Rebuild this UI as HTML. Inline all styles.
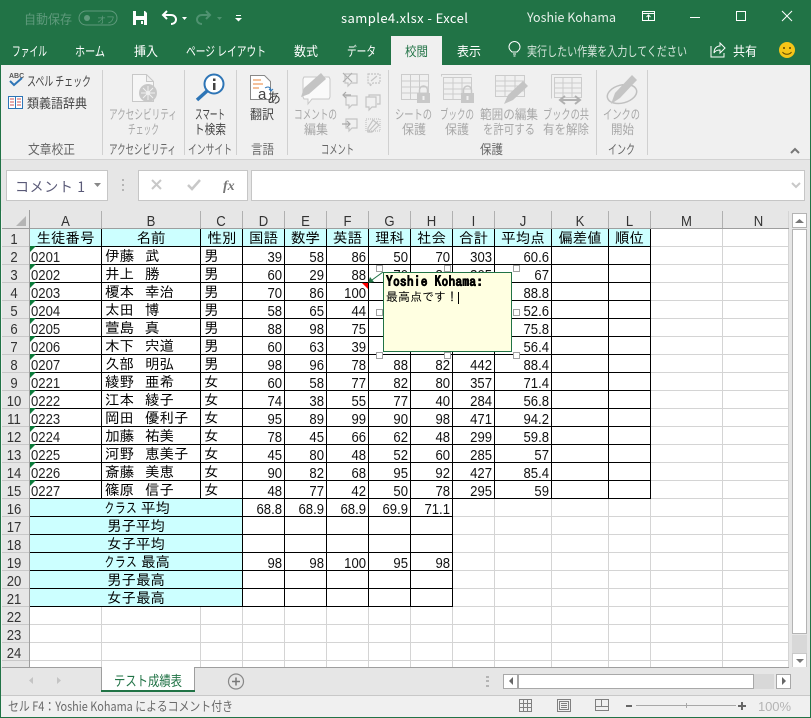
<!DOCTYPE html>
<html lang="ja"><head><meta charset="utf-8"><title>sample4.xlsx - Excel</title>
<style>
html,body{margin:0;padding:0;width:811px;height:718px;overflow:hidden;background:#f0f0f0}
svg{display:block}
rect{shape-rendering:crispEdges}
.u{font-family:"Noto Sans CJK JP","Liberation Sans",sans-serif;font-size:13px}
.w{fill:#fff}.g{fill:#a8a8a8}.d{fill:#444}.l{fill:#666}
.m{text-anchor:middle}
.c{font-family:"IPAGothic","Noto Sans CJK JP",sans-serif;font-size:14.5px;fill:#000}
.n{font-family:"Liberation Sans",sans-serif;font-size:14.5px;fill:#111;text-anchor:end}
.n text{transform-box:fill-box;transform-origin:100% 50%;transform:scaleX(.905)}
.a{font-family:"Liberation Sans",sans-serif;font-size:14.5px;fill:#222}
.a text{transform-box:fill-box;transform-origin:0 50%;transform:scaleX(.905)}
.h{font-family:"Liberation Sans",sans-serif;font-size:14.5px;fill:#333;text-anchor:middle}
.h text{transform-box:fill-box;transform-origin:50% 50%;transform:scaleX(.905)}
.t{fill:#0b7a3a}
.bk{fill:#000}
.lg{fill:#d4d4d4}
.hd{fill:#fff;stroke:#a0a0a0;stroke-width:1;shape-rendering:crispEdges}
.ic{fill:none;stroke:#c4c4c4;stroke-width:1.2}
.if{fill:#c4c4c4}
</style></head><body>
<svg width="811" height="718" viewBox="0 0 811 718" xmlns="http://www.w3.org/2000/svg">
<!-- frame -->
<rect width="811" height="718" fill="#217346"/>
<rect x="1" y="65" width="809" height="652" fill="#f0f0f0"/>
<!-- title -->
<text class="u" x="24" y="24" fill="#5f9a7c" textLength="48" lengthAdjust="spacingAndGlyphs">自動保存</text>
<rect x="79" y="11" width="38" height="14" rx="7" fill="none" stroke="#5f9a7c" style="shape-rendering:auto"/>
<circle cx="87" cy="18" r="3" fill="#5f9a7c"/>
<text class="u" x="97" y="23" style="font-size:9px" fill="#5f9a7c">オフ</text>
<path d="M133 11h12l2 2v12h-14z" fill="#fff"/><rect x="136" y="11" width="8" height="5" fill="#217346"/><rect x="136" y="20" width="8" height="5" fill="#217346"/><rect x="141" y="21" width="2" height="3" fill="#fff"/>
<path d="M167 11l-4 4 4 4M163 15h8c3 0 5 2 5 4.500s-2 4.500-5 4.500" fill="none" stroke="#fff" stroke-width="2"/>
<path d="M182 17h5l-2.500 3z" fill="#fff"/>
<path d="M206 11l4 4-4 4M210 15h-8c-3 0-5 2-5 4.500s2 4.500 5 4.500" fill="none" stroke="#4f9270" stroke-width="2"/>
<path d="M217 17h5l-2.500 3z" fill="#4f9270"/>
<rect x="236" y="15" width="5" height="1" fill="#fff"/><path d="M235 18h7l-3.500 3.500z" fill="#fff"/>
<text class="u w" x="341" y="23" style="font-size:13px" textLength="127" lengthAdjust="spacing">sample4.xlsx  -  Excel</text>
<text class="u w" x="527" y="22" style="font-size:13px;fill:#e6f0ea" textLength="89" lengthAdjust="spacingAndGlyphs">Yoshie Kohama</text>
<rect x="642.500" y="11.500" width="12" height="9" fill="none" stroke="#fff"/><rect x="642" y="13" width="13" height="1" fill="#fff"/><path d="M648.500 20v-5M646.500 17l2-2 2 2" stroke="#fff" fill="none"/>
<rect x="690" y="17" width="10" height="1" fill="#fff"/>
<rect x="736.500" y="11.500" width="9" height="9" fill="none" stroke="#fff"/>
<path d="M782 11l10 10M792 11l-10 10" stroke="#fff" fill="none"/>
<!-- tabs -->
<rect x="391" y="36" width="51" height="29" fill="#f0f0f0"/>
<g class="u">
<text class="w" x="12" y="56" textLength="35" lengthAdjust="spacingAndGlyphs">ファイル</text>
<text class="w" x="75" y="56" textLength="30" lengthAdjust="spacingAndGlyphs">ホーム</text>
<text class="w" x="134" y="56" textLength="24" lengthAdjust="spacingAndGlyphs">挿入</text>
<text class="w" x="186" y="56" textLength="80" lengthAdjust="spacingAndGlyphs">ページ レイアウト</text>
<text class="w" x="294" y="56" textLength="24" lengthAdjust="spacingAndGlyphs">数式</text>
<text class="w" x="347" y="56" textLength="29" lengthAdjust="spacingAndGlyphs">データ</text>
<text x="405" y="56" fill="#217346" textLength="23" lengthAdjust="spacingAndGlyphs">校閲</text>
<text class="w" x="457" y="56" textLength="24" lengthAdjust="spacingAndGlyphs">表示</text>
<text x="527" y="56" fill="#d5e5dc" textLength="160" lengthAdjust="spacingAndGlyphs">実行したい作業を入力してください</text>
<text class="w" x="733" y="56" textLength="24" lengthAdjust="spacingAndGlyphs">共有</text>
</g>
<path d="M512 52c-2-2-3-3-3-5a5.500 5.500 0 0 1 11 0c0 2-1 3-3 5zM513 54h3M513.500 56h2" fill="none" stroke="#fff"/>
<path d="M711 46v11h13v-4M714 53c0-5 3-7 6-7v-3l5 5-5 5v-3c-3 0-5 1-6 3z" fill="none" stroke="#fff"/>
<circle cx="787" cy="50" r="8" fill="#f5c518"/><circle cx="784" cy="48" r="1" fill="#5a4500"/><circle cx="790" cy="48" r="1" fill="#5a4500"/><path d="M782.500 52c2 3 7 3 9 0" fill="none" stroke="#5a4500"/>
<!-- ribbon -->
<rect x="1" y="159" width="809" height="1" fill="#d2d2d2"/>
<rect x="1" y="160" width="809" height="51" fill="#e6e6e6"/>
<g fill="#d0d0d0">
<rect x="102" y="70" width="1" height="85"/><rect x="184" y="70" width="1" height="85"/><rect x="236" y="70" width="1" height="85"/><rect x="287" y="70" width="1" height="85"/><rect x="388" y="70" width="1" height="85"/><rect x="596" y="70" width="1" height="85"/><rect x="647" y="70" width="1" height="85"/>
</g>
<g class="u">
<text class="d" x="27" y="86" textLength="64" lengthAdjust="spacingAndGlyphs">スペル チェック</text>
<text class="d" x="27" y="108" textLength="60" lengthAdjust="spacingAndGlyphs">類義語辞典</text>
<text class="l" x="28" y="154" textLength="47" lengthAdjust="spacingAndGlyphs">文章校正</text>
<text class="g" x="109" y="119" textLength="68" lengthAdjust="spacingAndGlyphs">アクセシビリティ</text>
<text class="g" x="128" y="134" textLength="31" lengthAdjust="spacingAndGlyphs">チェック</text>
<text class="l" x="109" y="154" textLength="67" lengthAdjust="spacingAndGlyphs">アクセシビリティ</text>
<text class="d" x="195" y="119" textLength="30" lengthAdjust="spacingAndGlyphs">スマート</text>
<text class="d" x="194" y="134" textLength="32" lengthAdjust="spacingAndGlyphs">ト検索</text>
<text class="l" x="188" y="154" textLength="44" lengthAdjust="spacingAndGlyphs">インサイト</text>
<text class="d" x="250" y="119" textLength="24" lengthAdjust="spacingAndGlyphs">翻訳</text>
<text class="l" x="251" y="154" textLength="23" lengthAdjust="spacingAndGlyphs">言語</text>
<text class="g" x="294" y="119" textLength="43" lengthAdjust="spacingAndGlyphs">コメントの</text>
<text class="g" x="304" y="134" textLength="24" lengthAdjust="spacingAndGlyphs">編集</text>
<text class="l" x="321" y="154" textLength="33" lengthAdjust="spacingAndGlyphs">コメント</text>
<text class="g" x="395" y="119" textLength="37" lengthAdjust="spacingAndGlyphs">シートの</text>
<text class="g" x="402" y="134" textLength="24" lengthAdjust="spacingAndGlyphs">保護</text>
<text class="g" x="440" y="119" textLength="34" lengthAdjust="spacingAndGlyphs">ブックの</text>
<text class="g" x="445" y="134" textLength="24" lengthAdjust="spacingAndGlyphs">保護</text>
<text class="g" x="480" y="119" textLength="58" lengthAdjust="spacingAndGlyphs">範囲の編集</text>
<text class="g" x="483" y="134" textLength="52" lengthAdjust="spacingAndGlyphs">を許可する</text>
<text class="g" x="543" y="119" textLength="46" lengthAdjust="spacingAndGlyphs">ブックの共</text>
<text class="g" x="543" y="134" textLength="46" lengthAdjust="spacingAndGlyphs">有を解除</text>
<text class="l" x="480" y="154" textLength="23" lengthAdjust="spacingAndGlyphs">保護</text>
<text class="g" x="603" y="119" textLength="37" lengthAdjust="spacingAndGlyphs">インクの</text>
<text class="g" x="611" y="134" textLength="23" lengthAdjust="spacingAndGlyphs">開始</text>
<text class="l" x="608" y="154" textLength="27" lengthAdjust="spacingAndGlyphs">インク</text>
</g>
<!-- ribbon icons -->
<text x="9" y="78" style="font:bold 7px 'Liberation Sans',sans-serif" fill="#555">ABC</text>
<path d="M10 81l4 4 8-7" fill="none" stroke="#2e75b6" stroke-width="2"/>
<rect x="8.500" y="96.500" width="14" height="12" fill="#fff" stroke="#2e75b6"/><rect x="15" y="96" width="1" height="13" fill="#2e75b6"/>
<path d="M10 99h4M10 102h4M10 105h4M17 99h4M17 102h4M17 105h4" stroke="#c55" stroke-width="1"/>
<path d="M132.500 74.500h14l7 7v20h-21zM146.500 74.500v7h7" fill="#f6f6f6" stroke="#c8c8c8"/>
<circle cx="148" cy="93" r="9" fill="#c8c8c8"/><circle cx="148" cy="93" r="2" fill="#f0f0f0"/><path d="M148 86v14M141 93h14M143 88l10 10M153 88l-10 10" stroke="#f0f0f0"/>
<circle cx="214" cy="84" r="9.500" fill="#fff" stroke="#2e75b6" stroke-width="2"/><rect x="213" y="83" width="2.500" height="7" fill="#444"/><rect x="213" y="78.500" width="2.500" height="2.500" fill="#444"/>
<path d="M207 91l-10 9" stroke="#2e75b6" stroke-width="3.500" fill="none"/>
<path d="M250.500 75.500h14l6 6v18h-20z" fill="#fff" stroke="#888"/>
<path d="M253 80h8M253 84h10M253 88h6" stroke="#e8833a" fill="none"/>
<text x="258" y="99" style="font:15px 'Liberation Sans',sans-serif" fill="#444">a</text>
<text x="267" y="103" style="font:14px 'Noto Sans CJK JP',sans-serif" fill="#444">あ</text>
<path d="M265 88c3-2 5-1 6 2M269 89l2 2 2-2" fill="none" stroke="#2e75b6"/>
<!-- comment icons -->
<path d="M304 77h25l1 2v18l-1 2h-17l-4 5v-5h-4l-1-2v-18z" fill="#fafafa" stroke="#c8c8c8"/>
<path d="M301 97l3-9 17-15 5 6-17 15z" fill="#c4c4c4"/>
<g class="ic">
<path d="M345 74h12v9h-6l-3 3v-3h-3z"/><path d="M343 73l9 9M352 73l-9 9" stroke="#b0b0b0"/>
<path d="M368 74h12v9h-7l-3 3v-3h-2z" stroke-dasharray="2 1"/><path d="M371 81l6-5"/>
<path d="M346 96h11v9h-5l-3 3v-3h-3z"/><path d="M351 95h-8M346 92l-3 3 3 3" stroke="#a8a8a8"/>
<path d="M366 97h10v10h-4l-3 3v-3h-3zM369 97v-2h11v9h-3"/>
<path d="M346 119h11v9h-5l-3 3v-3h-3z"/><path d="M342 124h8M347 121l3 3-3 3" stroke="#a8a8a8"/>
<rect x="366" y="119" width="14" height="12" stroke-dasharray="1 1" style="shape-rendering:auto"/><path d="M369 131l9-10M373 120l6 5-7 7h-4v-4z"/>
</g>
<!-- protect icons -->
<g fill="none" stroke="#cccccc">
<path d="M401.500 74.500h27v25h-27zM401.500 81h27M401.500 87h27M401.500 93h27M410.500 74.500v25M419.500 74.500v25"/>
<path d="M441.500 76.500v-2h30M443.500 77.500h28v22h-28zM443.500 83h28M443.500 89h28M443.500 94h28M453 77.500v22M462 77.500v22"/>
<path d="M495.500 75.500h29v21h-29zM495.500 81h29M495.500 86h29M495.500 91h29M505 75.500v21M515 75.500v21"/>
<path d="M551.500 74.500h30M551.500 74.500v24M554.500 77.500h27v20h-27zM554.500 83h27M554.500 88h27M554.500 93h27M563 77.500v20M572 77.500v20"/>
</g>
<rect x="417" y="93" width="13" height="10" fill="#c8c8c8"/><path d="M419.500 93v-3a4 4 0 0 1 8 0v3" fill="none" stroke="#c8c8c8" stroke-width="1.500"/><rect x="422.500" y="96" width="2" height="4" fill="#f0f0f0"/>
<rect x="461" y="93" width="13" height="10" fill="#c8c8c8"/><path d="M463.500 93v-3a4 4 0 0 1 8 0v3" fill="none" stroke="#c8c8c8" stroke-width="1.500"/><rect x="466.500" y="96" width="2" height="4" fill="#f0f0f0"/>
<path d="M504 104l4-9 15-14 5 5-15 14z" fill="#c4c4c4"/>
<path d="M561 100h18M565 96l-5 4 5 4M575 96l5 4-5 4" fill="none" stroke="#b0b0b0" stroke-width="2"/>
<ellipse cx="622" cy="94" rx="15" ry="9" fill="none" stroke="#c0c0c0" stroke-width="1.500" transform="rotate(-15 622 94)"/>
<path d="M611 104l4-11 17-18 5 5-17 18z" fill="#c4c4c4"/>
<path d="M791 153l4-4 4 4" fill="none" stroke="#777" stroke-width="2"/>
<!-- formula bar -->
<rect x="6.500" y="170.500" width="101" height="30" fill="#fff" stroke="#c6c6c6"/>
<rect x="138.500" y="170.500" width="109" height="30" fill="#fff" stroke="#c6c6c6"/>
<rect x="251.500" y="170.500" width="553" height="30" fill="#fff" stroke="#c6c6c6"/>
<text x="15" y="192" style="font:14px 'Noto Sans CJK JP',sans-serif" fill="#5a5a78" textLength="70" lengthAdjust="spacing">コメント 1</text>
<path d="M94 183h7l-3.500 4z" fill="#888"/>
<g fill="#b4b4b4"><rect x="122" y="179" width="2" height="2"/><rect x="122" y="184" width="2" height="2"/><rect x="122" y="189" width="2" height="2"/></g>
<path d="M152 180l9 9M161 180l-9 9" stroke="#c8c8c8" stroke-width="2" fill="none"/>
<path d="M188 185l4 4 8-9" stroke="#c8c8c8" stroke-width="2.500" fill="none"/>
<text x="223" y="190" style="font:italic bold 14px 'Liberation Serif',serif" fill="#777">fx</text>
<path d="M792 183l4 4 4-4" fill="none" stroke="#c8c8c8" stroke-width="2"/>
<!-- sheet area -->
<rect x="2" y="210" width="787" height="18" fill="#e6e6e6"/>
<rect x="2" y="228" width="27" height="439" fill="#e6e6e6"/>
<rect x="30" y="229" width="759" height="438" fill="#fff"/>
<rect x="789" y="211" width="21" height="457" fill="#e6e6e6"/>
<path d="M26 216v10h-10z" fill="#b5b5b5"/>
<!-- light grid -->
<g class="lg">
<rect x="30" y="246" width="758" height="1"/><rect x="30" y="264" width="758" height="1"/><rect x="30" y="282" width="758" height="1"/><rect x="30" y="300" width="758" height="1"/><rect x="30" y="318" width="758" height="1"/><rect x="30" y="336" width="758" height="1"/><rect x="30" y="354" width="758" height="1"/><rect x="30" y="372" width="758" height="1"/><rect x="30" y="390" width="758" height="1"/><rect x="30" y="408" width="758" height="1"/><rect x="30" y="426" width="758" height="1"/><rect x="30" y="444" width="758" height="1"/><rect x="30" y="462" width="758" height="1"/><rect x="30" y="480" width="758" height="1"/><rect x="30" y="498" width="758" height="1"/><rect x="30" y="516" width="758" height="1"/><rect x="30" y="534" width="758" height="1"/><rect x="30" y="552" width="758" height="1"/><rect x="30" y="570" width="758" height="1"/><rect x="30" y="588" width="758" height="1"/><rect x="30" y="606" width="758" height="1"/><rect x="30" y="624" width="758" height="1"/><rect x="30" y="642" width="758" height="1"/><rect x="30" y="660" width="758" height="1"/>
<rect x="101" y="229" width="1" height="438"/><rect x="200" y="229" width="1" height="438"/><rect x="242" y="229" width="1" height="438"/><rect x="284" y="229" width="1" height="438"/><rect x="326" y="229" width="1" height="438"/><rect x="368" y="229" width="1" height="438"/><rect x="410" y="229" width="1" height="438"/><rect x="452" y="229" width="1" height="438"/><rect x="494" y="229" width="1" height="438"/><rect x="551" y="229" width="1" height="438"/><rect x="608" y="229" width="1" height="438"/><rect x="650" y="229" width="1" height="438"/><rect x="722" y="229" width="1" height="438"/><rect x="788" y="211" width="1" height="457"/>
</g>
<!-- cyan fills -->
<rect x="30" y="229" width="620" height="17" fill="#ccffff"/>
<rect x="30" y="499" width="212" height="107" fill="#ccffff"/>
<!-- black grid -->
<g class="bk">
<rect x="30" y="246" width="620" height="1"/><rect x="30" y="264" width="620" height="1"/><rect x="30" y="282" width="620" height="1"/><rect x="30" y="300" width="620" height="1"/><rect x="30" y="318" width="620" height="1"/><rect x="30" y="336" width="620" height="1"/><rect x="30" y="354" width="620" height="1"/><rect x="30" y="372" width="620" height="1"/><rect x="30" y="390" width="620" height="1"/><rect x="30" y="408" width="620" height="1"/><rect x="30" y="426" width="620" height="1"/><rect x="30" y="444" width="620" height="1"/><rect x="30" y="462" width="620" height="1"/><rect x="30" y="480" width="620" height="1"/><rect x="30" y="498" width="620" height="1"/>
<rect x="30" y="516" width="422" height="1"/><rect x="30" y="534" width="422" height="1"/><rect x="30" y="552" width="422" height="1"/><rect x="30" y="570" width="422" height="1"/><rect x="30" y="588" width="422" height="1"/><rect x="30" y="606" width="423" height="1"/>
<rect x="101" y="229" width="1" height="269"/><rect x="200" y="229" width="1" height="269"/><rect x="551" y="229" width="1" height="269"/><rect x="608" y="229" width="1" height="269"/><rect x="650" y="229" width="1" height="270"/><rect x="494" y="229" width="1" height="270"/>
<rect x="242" y="229" width="1" height="378"/><rect x="284" y="229" width="1" height="378"/><rect x="326" y="229" width="1" height="378"/><rect x="368" y="229" width="1" height="378"/><rect x="410" y="229" width="1" height="378"/><rect x="452" y="229" width="1" height="378"/>
</g>
<!-- header lines -->
<rect x="2" y="228" width="787" height="1" fill="#9e9e9e"/>
<rect x="29" y="210" width="1" height="457" fill="#9e9e9e"/>
<g fill="#b0b0b0">
<rect x="101" y="211" width="1" height="17"/><rect x="200" y="211" width="1" height="17"/><rect x="242" y="211" width="1" height="17"/><rect x="284" y="211" width="1" height="17"/><rect x="326" y="211" width="1" height="17"/><rect x="368" y="211" width="1" height="17"/><rect x="410" y="211" width="1" height="17"/><rect x="452" y="211" width="1" height="17"/><rect x="494" y="211" width="1" height="17"/><rect x="551" y="211" width="1" height="17"/><rect x="608" y="211" width="1" height="17"/><rect x="650" y="211" width="1" height="17"/><rect x="722" y="211" width="1" height="17"/>
</g>
<g fill="#c8c8c8">
<rect x="2" y="246" width="27" height="1"/><rect x="2" y="264" width="27" height="1"/><rect x="2" y="282" width="27" height="1"/><rect x="2" y="300" width="27" height="1"/><rect x="2" y="318" width="27" height="1"/><rect x="2" y="336" width="27" height="1"/><rect x="2" y="354" width="27" height="1"/><rect x="2" y="372" width="27" height="1"/><rect x="2" y="390" width="27" height="1"/><rect x="2" y="408" width="27" height="1"/><rect x="2" y="426" width="27" height="1"/><rect x="2" y="444" width="27" height="1"/><rect x="2" y="462" width="27" height="1"/><rect x="2" y="480" width="27" height="1"/><rect x="2" y="498" width="27" height="1"/><rect x="2" y="516" width="27" height="1"/><rect x="2" y="534" width="27" height="1"/><rect x="2" y="552" width="27" height="1"/><rect x="2" y="570" width="27" height="1"/><rect x="2" y="588" width="27" height="1"/><rect x="2" y="606" width="27" height="1"/><rect x="2" y="624" width="27" height="1"/><rect x="2" y="642" width="27" height="1"/><rect x="2" y="660" width="27" height="1"/>
</g>
<!-- column headers -->
<g class="h">
<text x="65.500" y="226">A</text><text x="151" y="226">B</text><text x="221" y="226">C</text><text x="263.500" y="226">D</text><text x="305.500" y="226">E</text><text x="347.500" y="226">F</text><text x="389.500" y="226">G</text><text x="431.500" y="226">H</text><text x="473.500" y="226">I</text><text x="523" y="226">J</text><text x="580" y="226">K</text><text x="629.500" y="226">L</text><text x="686.500" y="226">M</text><text x="758.500" y="226">N</text>
</g>
<!-- row headers -->
<g class="h">
<text x="14" y="244">1</text><text x="14" y="262">2</text><text x="14" y="280">3</text><text x="14" y="298">4</text><text x="14" y="316">5</text><text x="14" y="334">6</text><text x="14" y="352">7</text><text x="14" y="370">8</text><text x="14" y="388">9</text><text x="14" y="406">10</text><text x="14" y="424">11</text><text x="14" y="442">12</text><text x="14" y="460">13</text><text x="14" y="478">14</text><text x="14" y="496">15</text><text x="14" y="514">16</text><text x="14" y="532">17</text><text x="14" y="550">18</text><text x="14" y="568">19</text><text x="14" y="586">20</text><text x="14" y="604">21</text><text x="14" y="622">22</text><text x="14" y="640">23</text><text x="14" y="658">24</text>
</g>
<!-- row 1 -->
<g class="c m">
<text x="65.500" y="243">生徒番号</text><text x="151" y="243">名前</text><text x="222" y="243">性別</text><text x="263.500" y="243">国語</text><text x="305.500" y="243">数学</text><text x="347.500" y="243">英語</text><text x="389.500" y="243">理科</text><text x="431.500" y="243">社会</text><text x="473.500" y="243">合計</text><text x="523" y="243">平均点</text><text x="580" y="243">偏差値</text><text x="629.500" y="243">順位</text>
</g>
<!-- ids -->
<g class="a">
<text x="31" y="262">0201</text><text x="31" y="280">0202</text><text x="31" y="298">0203</text><text x="31" y="316">0204</text><text x="31" y="334">0205</text><text x="31" y="352">0206</text><text x="31" y="370">0207</text><text x="31" y="388">0221</text><text x="31" y="406">0222</text><text x="31" y="424">0223</text><text x="31" y="442">0224</text><text x="31" y="460">0225</text><text x="31" y="478">0226</text><text x="31" y="496">0227</text>
</g>
<g class="t">
<path d="M30 246h6l-6 6zM30 264h6l-6 6zM30 282h6l-6 6zM30 300h6l-6 6zM30 318h6l-6 6zM30 336h6l-6 6zM30 354h6l-6 6zM30 372h6l-6 6zM30 390h6l-6 6zM30 408h6l-6 6zM30 426h6l-6 6zM30 444h6l-6 6zM30 462h6l-6 6zM30 480h6l-6 6z"/>
</g>
<!-- names -->
<g class="c">
<text x="105" y="261">伊藤</text><text x="145" y="261">武</text>
<text x="105" y="279">井上</text><text x="145" y="279">勝</text>
<text x="105" y="297">榎本</text><text x="145" y="297">幸治</text>
<text x="105" y="315">太田</text><text x="145" y="315">博</text>
<text x="105" y="333">萱島</text><text x="145" y="333">真</text>
<text x="105" y="351">木下</text><text x="145" y="351">宍道</text>
<text x="105" y="369">久部</text><text x="145" y="369">明弘</text>
<text x="105" y="387">綾野</text><text x="145" y="387">亜希</text>
<text x="105" y="405">江本</text><text x="145" y="405">綾子</text>
<text x="105" y="423">岡田</text><text x="145" y="423">優利子</text>
<text x="105" y="441">加藤</text><text x="145" y="441">祐美</text>
<text x="105" y="459">河野</text><text x="145" y="459">恵美子</text>
<text x="105" y="477">斎藤</text><text x="145" y="477">美恵</text>
<text x="105" y="495">篠原</text><text x="145" y="495">信子</text>
<text x="204" y="261">男</text><text x="204" y="279">男</text><text x="204" y="297">男</text><text x="204" y="315">男</text><text x="204" y="333">男</text><text x="204" y="351">男</text><text x="204" y="369">男</text>
<text x="204" y="387">女</text><text x="204" y="405">女</text><text x="204" y="423">女</text><text x="204" y="441">女</text><text x="204" y="459">女</text><text x="204" y="477">女</text><text x="204" y="495">女</text>
<text x="104" y="513" textLength="33" lengthAdjust="spacingAndGlyphs">クラス</text><text x="141" y="513">平均</text>
<text x="136" y="531" text-anchor="middle">男子平均</text>
<text x="136" y="549" text-anchor="middle">女子平均</text>
<text x="104" y="567" textLength="33" lengthAdjust="spacingAndGlyphs">クラス</text><text x="141" y="567">最高</text>
<text x="136" y="585" text-anchor="middle">男子最高</text>
<text x="136" y="603" text-anchor="middle">女子最高</text>
</g>
<!-- numbers -->
<g class="n">
<text x="282" y="262">39</text><text x="324" y="262">58</text><text x="366" y="262">86</text><text x="408" y="262">50</text><text x="450" y="262">70</text><text x="492" y="262">303</text><text x="549" y="262">60.6</text>
<text x="282" y="280">60</text><text x="324" y="280">29</text><text x="366" y="280">88</text><text x="408" y="280">70</text><text x="450" y="280">80</text><text x="492" y="280">305</text><text x="549" y="280">67</text>
<text x="282" y="298">70</text><text x="324" y="298">86</text><text x="366" y="298">100</text><text x="549" y="298">88.8</text>
<text x="282" y="316">58</text><text x="324" y="316">65</text><text x="366" y="316">44</text><text x="549" y="316">52.6</text>
<text x="282" y="334">88</text><text x="324" y="334">98</text><text x="366" y="334">75</text><text x="549" y="334">75.8</text>
<text x="282" y="352">60</text><text x="324" y="352">63</text><text x="366" y="352">39</text><text x="549" y="352">56.4</text>
<text x="282" y="370">98</text><text x="324" y="370">96</text><text x="366" y="370">78</text><text x="408" y="370">88</text><text x="450" y="370">82</text><text x="492" y="370">442</text><text x="549" y="370">88.4</text>
<text x="282" y="388">60</text><text x="324" y="388">58</text><text x="366" y="388">77</text><text x="408" y="388">82</text><text x="450" y="388">80</text><text x="492" y="388">357</text><text x="549" y="388">71.4</text>
<text x="282" y="406">74</text><text x="324" y="406">38</text><text x="366" y="406">55</text><text x="408" y="406">77</text><text x="450" y="406">40</text><text x="492" y="406">284</text><text x="549" y="406">56.8</text>
<text x="282" y="424">95</text><text x="324" y="424">89</text><text x="366" y="424">99</text><text x="408" y="424">90</text><text x="450" y="424">98</text><text x="492" y="424">471</text><text x="549" y="424">94.2</text>
<text x="282" y="442">78</text><text x="324" y="442">45</text><text x="366" y="442">66</text><text x="408" y="442">62</text><text x="450" y="442">48</text><text x="492" y="442">299</text><text x="549" y="442">59.8</text>
<text x="282" y="460">45</text><text x="324" y="460">80</text><text x="366" y="460">48</text><text x="408" y="460">52</text><text x="450" y="460">60</text><text x="492" y="460">285</text><text x="549" y="460">57</text>
<text x="282" y="478">90</text><text x="324" y="478">82</text><text x="366" y="478">68</text><text x="408" y="478">95</text><text x="450" y="478">92</text><text x="492" y="478">427</text><text x="549" y="478">85.4</text>
<text x="282" y="496">48</text><text x="324" y="496">77</text><text x="366" y="496">42</text><text x="408" y="496">50</text><text x="450" y="496">78</text><text x="492" y="496">295</text><text x="549" y="496">59</text>
<text x="282" y="514">68.8</text><text x="324" y="514">68.9</text><text x="366" y="514">68.9</text><text x="408" y="514">69.9</text><text x="450" y="514">71.1</text>
<text x="282" y="568">98</text><text x="324" y="568">98</text><text x="366" y="568">100</text><text x="408" y="568">95</text><text x="450" y="568">98</text>
</g>
<!-- comment -->
<path d="M362 283h6v6z" fill="#ff0000"/>
<path d="M383 272L372 280" stroke="#217346" fill="none" style="stroke-width:1"/>
<path d="M368 283l2-6 4 5z" fill="#217346"/>
<rect x="383.500" y="272.500" width="128" height="79" fill="#ffffe1" stroke="#217346"/>
<text x="386" y="286" style="font:bold 13.500px IPAGothic,'Liberation Mono',monospace;stroke:#000;stroke-width:.4" fill="#000" textLength="97">Yoshie Kohama:</text>
<text x="386" y="301" style="font:12px IPAGothic,'Noto Sans CJK JP',sans-serif" fill="#000">最高点です！</text>
<rect x="458" y="292" width="1" height="12" fill="#000"/>
<g class="hd">
<rect x="376.500" y="265.500" width="6" height="6"/><rect x="444.500" y="265.500" width="6" height="6"/><rect x="513.500" y="265.500" width="6" height="6"/>
<rect x="376.500" y="309.500" width="6" height="6"/><rect x="513.500" y="309.500" width="6" height="6"/>
<rect x="376.500" y="352.500" width="6" height="6"/><rect x="444.500" y="352.500" width="6" height="6"/><rect x="513.500" y="352.500" width="6" height="6"/>
</g>
<!-- v scrollbar -->
<rect x="792.500" y="213.500" width="14" height="14" fill="#fff" stroke="#b4b4b4"/>
<path d="M795 223h9l-4.500-4z" fill="#777"/>
<rect x="792.500" y="229.500" width="14" height="404" fill="#fff" stroke="#b4b4b4"/>
<rect x="792" y="635" width="15" height="18" fill="#d8d8d8"/>
<rect x="792.500" y="653.500" width="14" height="14" fill="#fff" stroke="#c8c8c8"/>
<path d="M796 659h8l-4 4z" fill="#777"/>
<!-- tab bar -->
<rect x="1" y="667" width="809" height="28" fill="#e6e6e6"/>
<rect x="2" y="667" width="787" height="1" fill="#9e9e9e"/>
<rect x="1" y="695" width="809" height="1" fill="#c8c8c8"/>
<path d="M33 677v7l-4-3.500zM57 677v7l4-3.500z" fill="#c4c4c4"/>
<rect x="101" y="667" width="93" height="25" fill="#fff"/>
<rect x="101" y="667" width="1" height="25" fill="#9e9e9e"/><rect x="194" y="667" width="1" height="25" fill="#9e9e9e"/>
<rect x="101" y="690" width="94" height="2" fill="#217346"/>
<text class="u" x="114" y="686" style="font-size:14px" fill="#217346" textLength="68" lengthAdjust="spacingAndGlyphs">テスト成績表</text>
<circle cx="236" cy="681.500" r="7.500" fill="none" stroke="#888" stroke-width="1.200"/>
<path d="M232 681.500h8M236 677.500v8" stroke="#777" stroke-width="1.500" fill="none"/>
<g fill="#b4b4b4"><rect x="486" y="676" width="3" height="2"/><rect x="486" y="680" width="3" height="2"/><rect x="486" y="685" width="3" height="2"/></g>
<rect x="503.500" y="674.500" width="14" height="14" fill="#fff" stroke="#a8a8a8"/>
<path d="M513 677v8l-4-4z" fill="#666"/>
<rect x="518" y="674" width="256" height="15" fill="#d8d8d8"/>
<rect x="518.500" y="674.500" width="235" height="14" fill="#fff" stroke="#a8a8a8"/>
<rect x="776.500" y="674.500" width="14" height="14" fill="#fff" stroke="#a8a8a8"/>
<path d="M782 677v8l4-4z" fill="#666"/>
<!-- status -->
<text class="u" x="8" y="711" fill="#6a6a6a" textLength="225" lengthAdjust="spacingAndGlyphs">セル F4：Yoshie Kohama によるコメント付き</text>
<g fill="none" stroke="#808080">
<path d="M519.500 699.500h12v12h-12zM523.500 699.500v12M527.500 699.500v12M519.500 703.500h12M519.500 707.500h12"/>
<path d="M557.500 699.500h13v12h-13zM559.500 701.500h9v8h-9zM561 703.500h6M561 705.500h6M561 707.500h6"/>
<path d="M595.500 699.500h13v11h-13zM595.500 706.500h13M601.500 699.500v7"/>
</g>
<rect x="626" y="705" width="6" height="2" fill="#666"/>
<rect x="636" y="705" width="100" height="1" fill="#a8a8a8"/>
<rect x="686" y="703" width="1" height="5" fill="#a8a8a8"/>
<rect x="738" y="705" width="8" height="2" fill="#666"/><rect x="741" y="702" width="2" height="8" fill="#666"/>
<text x="758" y="711" style="font:13px 'Liberation Sans',sans-serif" fill="#b4b4b4" textLength="33">100%</text>
<rect x="0" y="717" width="811" height="1" fill="#217346"/>
</svg>
</body></html>
